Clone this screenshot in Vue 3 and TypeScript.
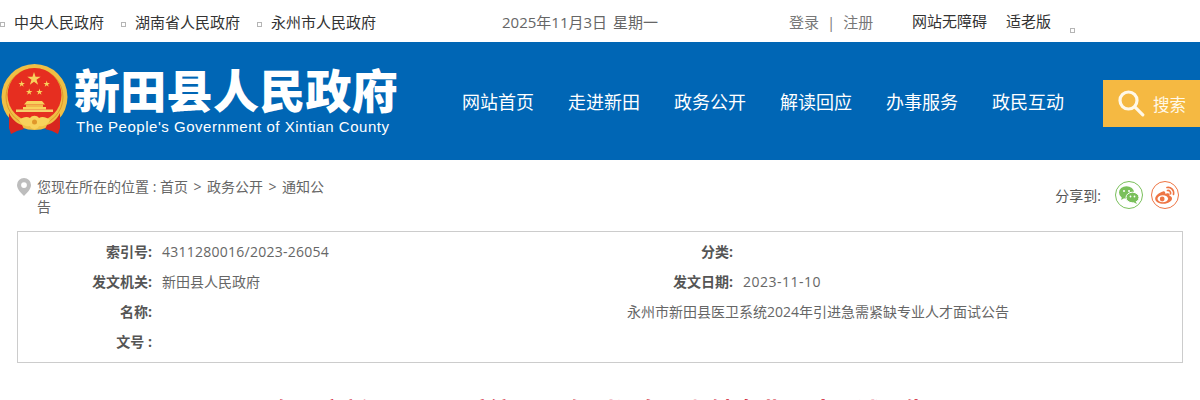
<script setup lang="ts">
const govLinks = ['中央人民政府', '湖南省人民政府', '永州市人民政府'];
const navItems = ['网站首页', '走进新田', '政务公开', '解读回应', '办事服务', '政民互动'];
const smallStars = [
  { x: 21.7, y: 84 },
  { x: 46.7, y: 84 },
  { x: 29.2, y: 92 },
  { x: 39.5, y: 92 },
];
const starPoints = (cx: number, cy: number, r: number) => {
  const pts: string[] = [];
  for (let i = 0; i < 10; i++) {
    const rad = i % 2 === 0 ? r : r * 0.38;
    const a = -Math.PI / 2 + (i * Math.PI) / 5;
    pts.push(`${(cx + rad * Math.cos(a)).toFixed(2)},${(cy + rad * Math.sin(a)).toFixed(2)}`);
  }
  return pts.join(' ');
};
</script>

<template>
  <div class="page">
    <div class="topbar">
      <ul class="gov-links">
        <li v-for="link in govLinks" :key="link"><i class="dot"></i>{{ link }}</li>
      </ul>
      <div class="date">2025年11月3日<span class="date-gap">星期一</span></div>
      <div class="login">登录<span class="sep">|</span>注册</div>
      <div class="tools">
        <span>网站无障碍</span>
        <span>适老版</span>
        <i class="dot dot-end"></i>
      </div>
    </div>

    <header class="header">
      <svg class="emblem" width="70" height="76" viewBox="0 60 70 76">
        <circle cx="34.5" cy="97" r="33" fill="#f0bf45" />
        <circle cx="34.5" cy="97" r="28.5" fill="none" stroke="#dc9a28" stroke-width="1" />
        <circle cx="34.5" cy="95" r="27" fill="#e62e20" />
        <polygon :points="starPoints(34, 79, 7)" fill="#f8d25c" />
        <polygon v-for="s in smallStars" :key="s.x" :points="starPoints(s.x, s.y, 3.4)" fill="#f8d25c" />
        <path d="M27 101h15l3 3.500H24z" fill="#f8d25c" />
        <rect x="26" y="104.500" width="17" height="2.500" fill="#f2b64a" />
        <path d="M23 107h23v2.500H23z" fill="#f8d25c" />
        <path d="M16 109.500h37v2.500H16z" fill="#f6cf6a" />
        <path d="M9 113c3 6 7 10 13 12l2 4-7 2-6 3-2-6z" fill="#d8261f" />
        <path d="M60 113c-3 6-7 10-13 12l-2 4 7 2 6 3 2-6z" fill="#d8261f" />
        <path d="M19 120c4-3 8-4 11-2 2-3 7-3 9 0 3-2 7-1 11 2-2 5-7 7-11 6-1 4-8 4-9 0-4 1-9-1-11-6z" fill="#f8d25c" />
        <circle cx="34.500" cy="122" r="2.500" fill="#e0972a" />
      </svg>
      <div class="brand">
        <div class="brand-cn">新田县人民政府</div>
        <div class="brand-en">The People's Government of Xintian County</div>
      </div>
      <nav class="nav">
        <a v-for="item in navItems" :key="item">{{ item }}</a>
      </nav>
      <div class="search">
        <svg width="27" height="27" viewBox="0 0 27 27">
          <circle cx="10.500" cy="10.500" r="8.500" fill="none" stroke="#fff8e8" stroke-width="3.200" />
          <path d="M16.800 16.800l8 8" stroke="#fff8e8" stroke-width="3.200" stroke-linecap="round" />
        </svg>
        <span>搜索</span>
      </div>
    </header>

    <div class="crumb-row">
      <div class="crumb">
        <svg class="pin" width="14" height="18" viewBox="0 0 14 18">
          <path fill-rule="evenodd" d="M7 0a7 7 0 0 1 7 7c0 4-4 8-7 11C4 15 0 11 0 7a7 7 0 0 1 7-7zm0 4.200a2.900 2.900 0 1 0 0 5.800 2.900 2.900 0 0 0 0-5.800z" fill="#bdbdbd" />
        </svg>
        <div class="crumb-text">您现在所在的位置 : 首页<span class="gt">&gt;</span>政务公开<span class="gt">&gt;</span>通知公告</div>
      </div>
      <div class="share">
        <span class="share-label">分享到:</span>
        <span class="share-btn wechat">
          <svg width="22" height="20" viewBox="0 0 22 20">
            <ellipse cx="8.500" cy="7.500" rx="7.500" ry="6.200" fill="#7ac05b" />
            <path d="M4 11l-.8 4 4-2.500z" fill="#7ac05b" />
            <ellipse cx="14.500" cy="12.500" rx="6.500" ry="5.300" fill="#7ac05b" stroke="#fff" stroke-width="1" />
            <path d="M17.500 16l1.500 3-4-2z" fill="#7ac05b" />
            <circle cx="6" cy="6" r="1" fill="#fff" />
            <circle cx="11" cy="6" r="1" fill="#fff" />
            <circle cx="12.500" cy="11.500" r=".9" fill="#fff" />
            <circle cx="16.500" cy="11.500" r=".9" fill="#fff" />
          </svg>
        </span>
        <span class="share-btn weibo">
          <svg width="22" height="20" viewBox="0 0 22 20">
            <path d="M9 6.500C5 7.500 1 11 1.200 14c.2 3 4 4.800 8.300 4.800 4.800 0 8.500-2.800 8.500-5.300 0-1.800-1.800-2.400-2.600-2.700.6-1.500.2-2.700-2.200-2.500-1 .1-2 .6-2 .6.300-1.500-.5-3-2.200-2.400z" fill="#ee7443" />
            <ellipse cx="8.800" cy="13.800" rx="5.300" ry="3.500" fill="#fff" />
            <circle cx="8.200" cy="14" r="2.400" fill="#ee7443" />
            <path d="M13 2.500c3.500-.8 7.300 2 6.500 6.800M13.500 5.500c2-.3 3.500 1.300 3 3.300" fill="none" stroke="#ee7443" stroke-width="1.700" stroke-linecap="round" />
          </svg>
        </span>
      </div>
    </div>

    <div class="info">
      <div class="label">索引号:</div>
      <div class="value spaced-id">4311280016/2023-26054</div>
      <div class="label">分类:</div>
      <div class="value"></div>

      <div class="label">发文机关:</div>
      <div class="value">新田县人民政府</div>
      <div class="label">发文日期:</div>
      <div class="value spaced-date">2023-11-10</div>

      <div class="label">名称:</div>
      <div class="value"></div>
      <div class="name-value">永州市新田县医卫系统2024年引进急需紧缺专业人才面试公告</div>

      <div class="label">文号 :</div>
    </div>

    <h1 class="title">永州市新田县医卫系统2024年引进急需紧缺专业人才面试公告</h1>
  </div>
</template>

<style>
html,
body {
  margin: 0;
  overflow: hidden;
  background: #fff;
}
</style>

<style scoped>
.page {
  width: 1200px;
  font-family: "Open Sans", "Noto Sans CJK SC", sans-serif;
  font-size: 14px;
  color: #666;
}

.topbar {
  height: 42px;
  display: flex;
  align-items: center;
  font-size: 15px;
}

.gov-links {
  display: flex;
  gap: 17px;
  list-style: none;
  margin: 0;
  padding: 0;
  color: #333;
  width: 502px;
}

.gov-links li {
  display: flex;
  align-items: center;
  gap: 9px;
}

.dot {
  display: block;
  width: 3px;
  height: 3px;
  border: 1px solid #b5b5b5;
  margin-top: 6px;
}

.date {
  width: 287px;
  color: #666;
}

.date-gap {
  margin-left: 6px;
}

.login {
  width: 123px;
  color: #777;
}

.sep {
  margin: 0 8px;
}

.tools {
  display: flex;
  gap: 19px;
  color: #333;
}

.dot-end {
  margin-top: 18px;
}

.header {
  height: 118px;
  background: #0066b5;
  display: flex;
  align-items: flex-start;
}

.emblem {
  flex: none;
  margin-top: 18px;
}

.brand {
  flex: none;
  width: 387px;
  margin-left: 5px;
  color: #fff;
}

.brand-cn {
  font-family: "Noto Sans CJK SC", sans-serif;
  font-weight: 900;
  font-size: 46px;
  letter-spacing: 0.3px;
  line-height: 60px;
  margin-top: 16px;
  margin-left: -1px;
}

.brand-en {
  font-family: "Liberation Sans", sans-serif;
  font-size: 15px;
  letter-spacing: 0.52px;
  line-height: 18px;
  margin-left: 1px;
}

.nav {
  display: flex;
  gap: 34px;
  width: 641px;
  height: 118px;
  align-items: center;
  font-size: 18px;
  color: #fff;
}

.search {
  flex: none;
  width: 97px;
  height: 47px;
  margin-top: 38px;
  background: #f5b942;
  display: flex;
  align-items: center;
  color: #fff8e8;
  font-size: 16.500px;
}

.search svg {
  margin-left: 15px;
  margin-right: 8px;
}

.crumb-row {
  display: flex;
  justify-content: space-between;
  padding: 17px 21px 0 17px;
  height: 54px;
}

.crumb {
  display: flex;
  gap: 6px;
}

.pin {
  margin-top: 1px;
}

.crumb-text {
  width: 290px;
  line-height: 20px;
}

.gt {
  margin: 0 5.500px;
}

.share {
  display: flex;
  align-items: flex-start;
  gap: 8px;
  margin-top: 4px;
}

.share-label {
  color: #555;
  line-height: 30px;
  margin-right: 6px;
}

.share-btn {
  width: 26px;
  height: 26px;
  border: 1px solid;
  border-radius: 50%;
  display: flex;
  align-items: center;
  justify-content: center;
}

.wechat {
  border-color: #7ac05b;
}

.weibo {
  border-color: #ee7443;
}

.info {
  margin: 0 17px;
  height: 125px;
  border: 1px solid #ccc;
  display: grid;
  grid-template-columns: 134px 475px 106px 1fr;
  grid-auto-rows: 30px;
  padding: 5px 0 0;
  line-height: 30px;
}

.label {
  text-align: right;
  font-weight: 700;
  color: #555;
}

.value {
  padding-left: 10px;
}

.spaced-id {
  letter-spacing: 0.25px;
}

.spaced-date {
  letter-spacing: 0.5px;
}

.name-value {
  grid-column: 3 / 5;
}

.title {
  margin: 30px 0 0;
  text-align: center;
  font-size: 24px;
  line-height: 36px;
  font-weight: 700;
  color: #d0122d;
}
</style>
